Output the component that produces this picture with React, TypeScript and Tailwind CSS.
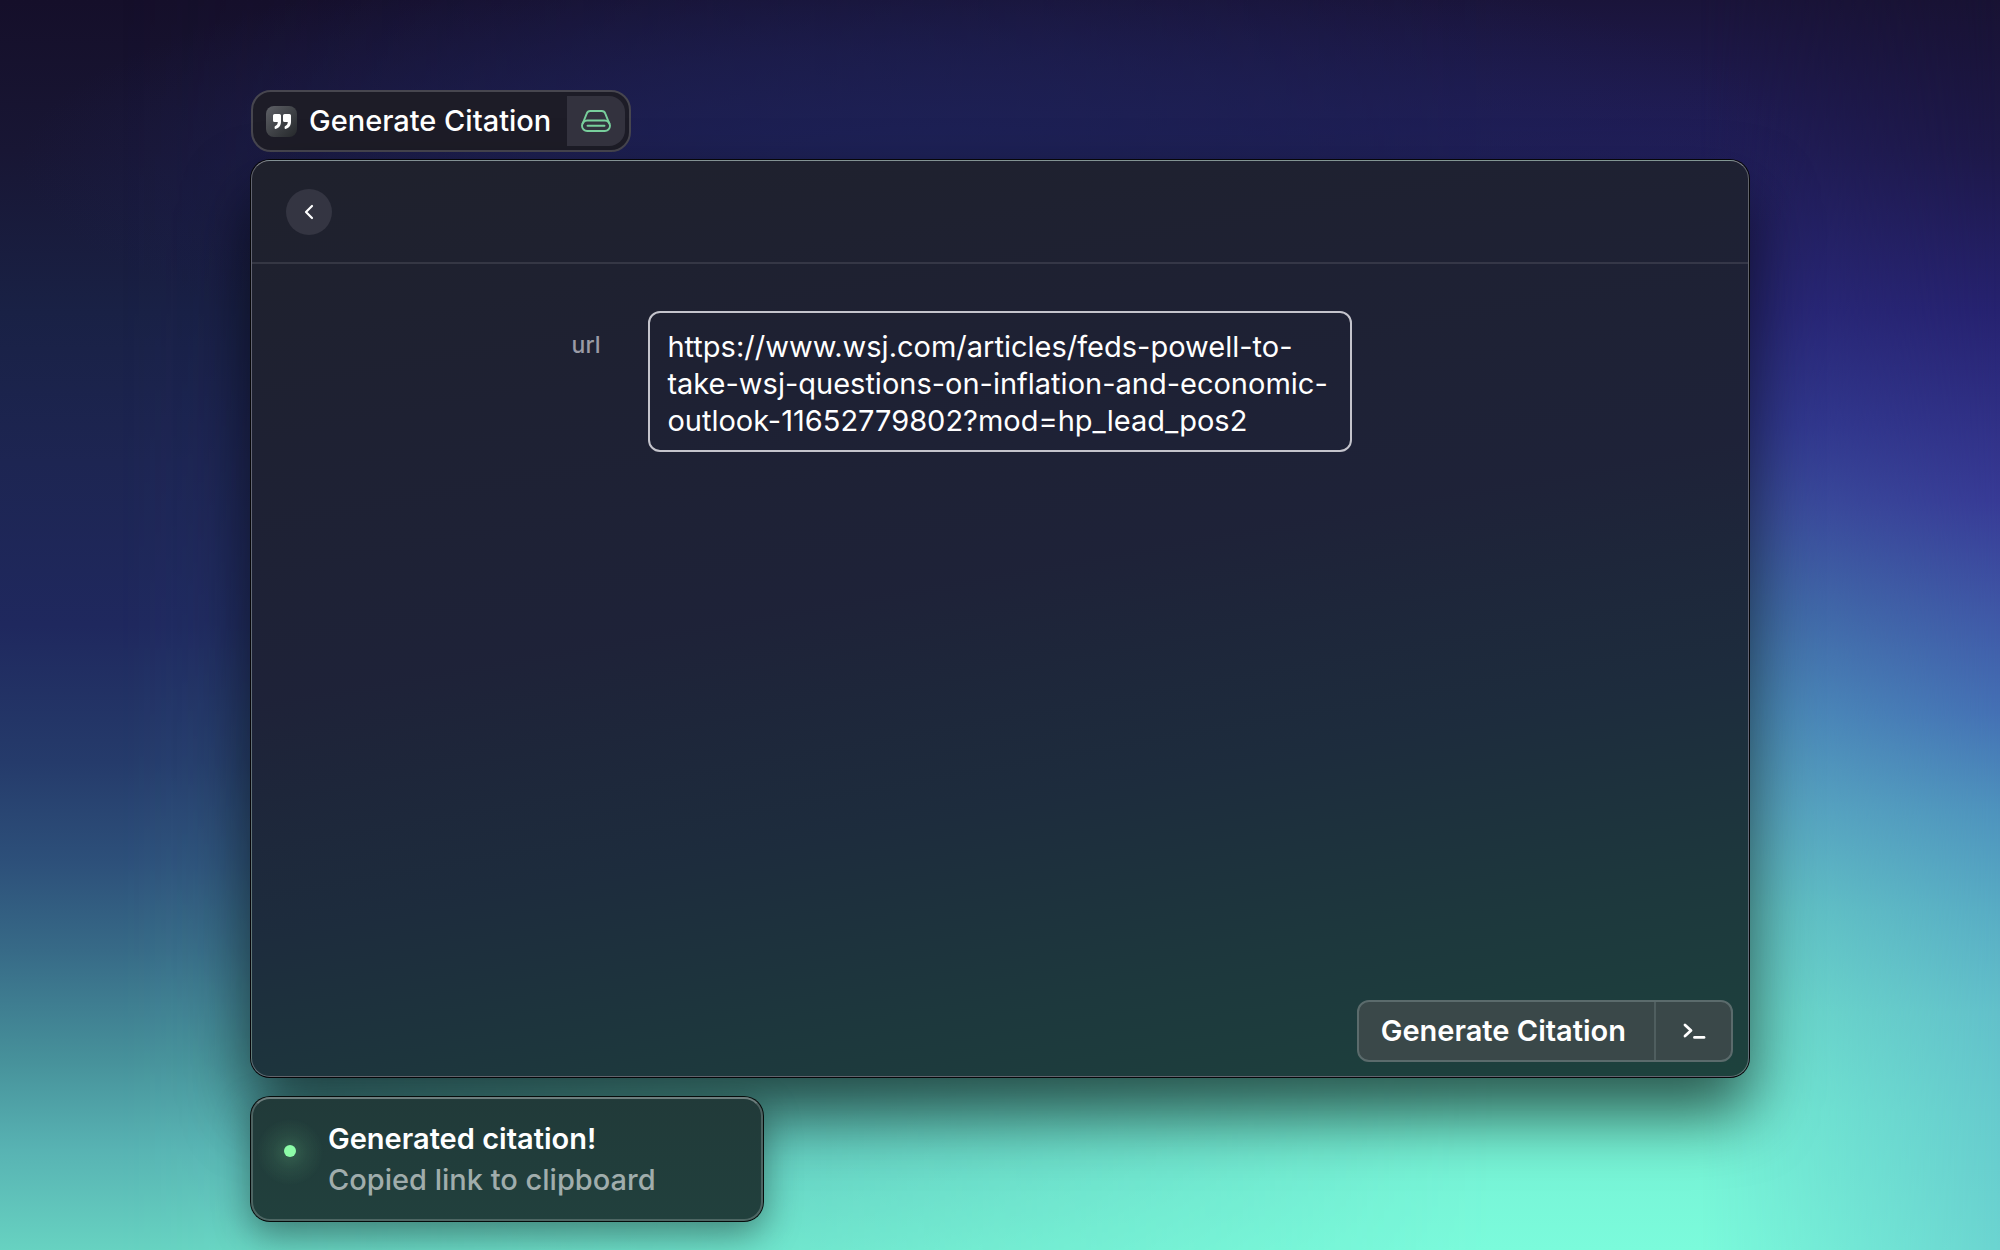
const ARTICLE_URL =
  "https://www.wsj.com/articles/feds-powell-to-take-wsj-questions-on-inflation-and-economic-outlook-11652779802?mod=hp_lead_pos2";

function QuoteIcon() {
  return (
    <svg width="18" height="15" viewBox="0 0 18 15" fill="currentColor" aria-hidden="true">
      <path d="M1.6 0H6.4Q8 0 8 1.6V7.4C8 11.6 6 14 2.6 14.9Q1.6 15 1.6 14V12.8Q1.6 12.2 2.3 11.9C4 11.2 4.7 10 4.8 8H1.6Q0 8 0 6.4V1.6Q0 0 1.6 0Z" />
      <path d="M11.6 0H16.4Q18 0 18 1.6V7.4C18 11.6 16 14 12.6 14.9Q11.6 15 11.6 14V12.8Q11.6 12.2 12.3 11.9C14 11.2 14.7 10 14.8 8H11.6Q10 8 10 6.4V1.6Q10 0 11.6 0Z" />
    </svg>
  );
}

function DriveIcon() {
  return (
    <svg width="30" height="22" viewBox="0 0 30 22" fill="none" stroke="currentColor" strokeWidth="1.9" strokeLinecap="round" strokeLinejoin="round" aria-hidden="true">
      <path d="M1.8 13.4L5.8 3.4Q6.6 1 9.2 1H20.8Q23.4 1 24.2 3.4L28.2 13.4" />
      <rect x="1" y="10.5" width="28" height="10.5" rx="5.2" />
      <path d="M6.5 15.8H23.5" />
    </svg>
  );
}

function Backdrop() {
  return (
    <div className="absolute inset-0 -z-10" aria-hidden="true">
      <div className="absolute inset-0 bg-[linear-gradient(to_bottom,#150f2a_0%,#181634_12%,#192145_25%,#1d2552_37%,#1f285e_50%,#253b6b_61%,#2d507a_69%,#376a87_76%,#47929b_85%,#58b3b3_92%,#67d2c1_100%)]" />
      <div className="absolute inset-0 bg-[linear-gradient(to_bottom,#1a143a_0%,#1f1b53_9%,#2a2a7a_25%,#323c92_34%,#3c559f_41%,#4274aa_49%,#4e94ba_57%,#5caec2_65%,#66ccc6_73%,#6edfcb_81%,#75f0d4_89%,#7bfbdb_100%)] [mask-image:linear-gradient(to_right,transparent_6%,black_75%)]" />
      <div className="absolute inset-0 bg-[linear-gradient(to_bottom,#181233_0%,#1d1848_12%,#262270_25%,#373a95_40%,#3f57a6_49%,#4470b4_57%,#4e93bd_65%,#58acc4_73%,#62c0ca_81%,#66cacd_89%,#6bd4d0_100%)] [mask-image:linear-gradient(to_right,transparent_85%,black_100%)]" />
      <div className="absolute inset-0 bg-[radial-gradient(ellipse_45%_18%_at_46%_13%,#1d2156_0%,#1d215699_50%,#1d215600_100%)]" />
    </div>
  );
}

function CommandChip() {
  return (
    <div className="ml-px flex w-fit items-center rounded-[20px] border-2 border-[#47464f] bg-[#1d1c27] p-1">
      <span className="ml-[9px] flex size-[31px] items-center justify-center rounded-lg bg-linear-to-br from-[#5f6167] to-[#25282b] text-white">
        <QuoteIcon />
      </span>
      <h1 className="mr-4 ml-3 text-[29px] leading-10 font-medium text-white">Generate Citation</h1>
      <span className="flex h-[50px] w-[58px] items-center justify-center rounded-r-2xl bg-[#33323e] text-[#78cf9c]">
        <DriveIcon />
      </span>
    </div>
  );
}

function CitationPanel() {
  return (
    <main className="mt-[7px] flex min-h-[919px] flex-col rounded-[20px] border border-black/80 bg-[#1e2030] shadow-[0_36px_64px_rgba(0,0,0,0.62)]">
      <form
        className="flex grow flex-col rounded-[19px] border border-white/30 border-t-white/45 bg-[linear-gradient(170deg,#1f212c_0%,#1e2133_26%,#1e2238_46%,#1d2c3d_66%,#1d383d_83%,#1d423d_100%)]"
        onSubmit={(event) => event.preventDefault()}
      >
        <header className="border-b-2 border-white/10 px-[34px] pt-7 pb-[27px]">
          <button type="button" aria-label="Back" className="flex size-[46px] items-center justify-center rounded-full bg-[#343542] text-white">
            <svg width="10" height="16" viewBox="0 0 10 16" fill="none" stroke="currentColor" strokeWidth="2.2" strokeLinecap="round" strokeLinejoin="round" aria-hidden="true">
              <path d="M8 2L2 8L8 14" />
            </svg>
          </button>
        </header>

        <div className="grid grow grid-cols-[1fr_47%_1fr] items-start gap-x-12 pt-[47px]">
          <label htmlFor="url" className="pt-4 text-right text-[23px] leading-9 font-medium text-[#9a9ba6]">
            url
          </label>
          <textarea
            id="url"
            spellCheck={false}
            defaultValue={ARTICLE_URL}
            className="block field-sizing-content w-full resize-none overflow-hidden rounded-xl border-2 border-[#c4c4cc] bg-transparent px-[17px] pt-[15px] pb-[11px] text-[29px] leading-[37px] text-white outline-none"
          />
        </div>

        <footer className="flex justify-end px-[15px] pb-[14px]">
          <div className="flex h-[62px] rounded-xl border-2 border-[#5b6b6c] bg-[#3a4849] text-white">
            <button type="submit" className="pr-7 pl-[22px] text-[29px] font-semibold">
              Generate Citation
            </button>
            <button type="button" aria-label="Open console" className="flex w-[77px] items-center justify-center border-l-2 border-[#4f5e5f]">
              <svg width="24" height="16" viewBox="0 0 24 16" fill="none" stroke="currentColor" strokeWidth="2.8" strokeLinecap="round" strokeLinejoin="round" aria-hidden="true">
                <path d="M3 2L9 7.5L3 13" />
                <path d="M12.5 14.4H22" />
              </svg>
            </button>
          </div>
        </footer>
      </form>
    </main>
  );
}

function Toast() {
  return (
    <div role="status" className="mt-[18px] w-[514px] rounded-[20px] border border-black/80 bg-linear-to-b from-[#213a39] to-[#21403d] shadow-[0_12px_36px_rgba(0,0,0,0.4)]">
      <div className="flex items-center rounded-[19px] border-2 border-white/20 border-t-white/35 bg-[radial-gradient(circle_34px_at_37px_53px,#8dfba82e,#8dfba812_50%,transparent)] py-[19px] pl-[31px]">
        <span className="mb-4 size-3 rounded-full bg-[#8dfba8]" />
        <div className="ml-8 text-[29px] leading-[41px]">
          <p className="font-semibold text-white">Generated citation!</p>
          <p className="font-medium text-[#a0adac]">Copied link to clipboard</p>
        </div>
      </div>
    </div>
  );
}

export default function App() {
  return (
    <div className="relative isolate min-h-screen overflow-hidden pt-[90px] font-['Inter',sans-serif]">
      <Backdrop />
      <div className="mx-auto w-3/4">
        <CommandChip />
        <CitationPanel />
        <Toast />
      </div>
    </div>
  );
}
